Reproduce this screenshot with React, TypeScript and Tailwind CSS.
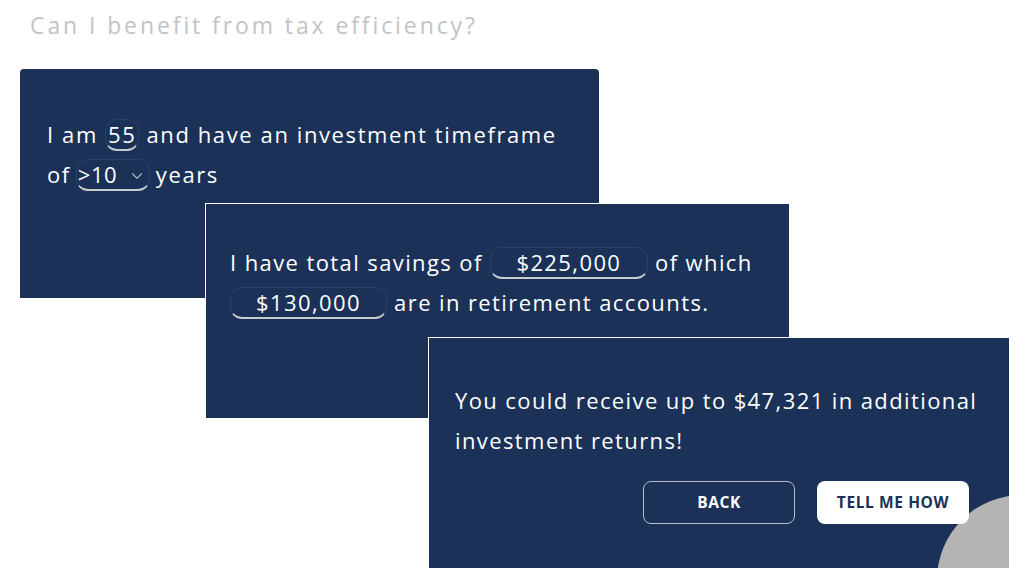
import React from 'react';
import { ChevronDown } from 'lucide-react';

const font = { fontFamily: '"Open Sans", "DejaVu Sans", sans-serif' };

const Field: React.FC<{ value: string; className?: string; chevron?: boolean }> = ({ value, className = '', chevron }) => (
  <span
    className={`inline-block h-[32px] leading-[29px] rounded-[12px] border border-[#2c4068] border-b-2 border-b-[#c9cbd0] align-baseline ${chevron ? 'text-left pl-[1px]' : 'text-center'} ${className}`}
  >
    {value}
    {chevron && <ChevronDown className="inline ml-[11px] -mt-[3px] text-[#a9afbd]" size={18} strokeWidth={1.6} />}
  </span>
);

export default function App() {
  return (
    <div className="w-[1027px] h-[581px] bg-white overflow-hidden text-white" style={font}>
      <h1 className="pl-[30px] pt-[8px] h-[69px] text-[23px] tracking-[2.9px] text-[#c3c3c3]">
        Can I benefit from tax efficiency?
      </h1>

      <div className="flex flex-col tracking-[1.4px]">
        {/* Card 1 */}
        <div className="ml-[20px] w-[579px] h-[229px] bg-[#1b3157] rounded-t-[4px] px-[27px] pt-[45px] text-[22px] leading-[40px] tracking-[1.6px]">
          I am <Field value="55" className="w-[34px]" /> and have an investment timeframe
          <br />
          of<Field value=">10" chevron className="w-[74px] ml-[5px] mr-[6px] tracking-[0.5px]" />years
        </div>

        {/* Card 2 */}
        <div className="relative ml-[205px] -mt-[95px] w-[585px] h-[216px] bg-[#1b3157] border border-white px-[24px] pt-[38px] text-[22px] leading-[40px]">
          I have total savings of <Field value="$225,000" className="w-[158px]" /> of which
          <br />
          <Field value="$130,000" className="w-[157px]" /> are in retirement accounts.
        </div>

        {/* Card 3 */}
        <div className="relative ml-[428px] -mt-[82px] w-[582px] h-[232px] bg-[#1b3157] border border-white overflow-hidden px-[26px] pt-[42px]">
          <p className="text-[22px] leading-[40px]">
            You could receive up to $47,321 in additional
            <br />
            investment returns!
          </p>
          <div className="flex gap-[22px] ml-[188px] mt-[21px] tracking-[0.6px]">
            <button className="w-[152px] h-[43px] rounded-[8px] border border-[#b7bcc8] text-[15.5px] font-bold">
              BACK
            </button>
            <button className="relative z-10 w-[152px] h-[43px] rounded-[8px] bg-white text-[#1b3157] text-[15.5px] font-bold">
              TELL ME HOW
            </button>
          </div>
          <div className="absolute left-[508px] top-[157px] w-[170px] h-[170px] rounded-full bg-[#b4b4b4]" />
        </div>
      </div>
    </div>
  );
}
